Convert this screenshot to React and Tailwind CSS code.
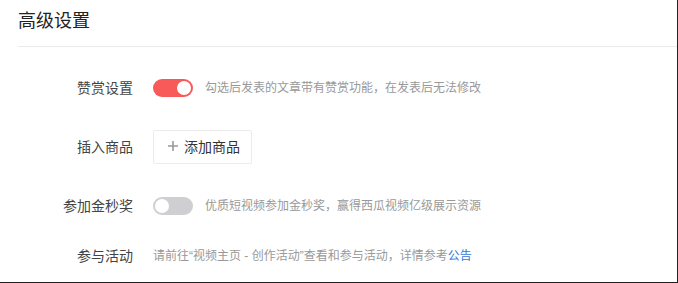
import React, { useState } from "react";

const FONT = { fontFamily: '"Liberation Sans", "Noto Sans CJK SC", sans-serif' };

// Simple switch used by the reward / golden-second rows
const Toggle = ({ on, onChange }) => (
  <button
    type="button"
    onClick={() => onChange(!on)}
    className={`relative w-[40px] h-[18px] rounded-full shrink-0 ${
      on ? "bg-[#f85959]" : "bg-[#cfcfd1]"
    }`}
  >
    <span
      className={`absolute top-[2px] w-[14px] h-[14px] rounded-full bg-white ${
        on ? "left-[24px]" : "left-[2px]"
      }`}
    />
  </button>
);

const Row = ({ label, className = "", children }) => (
  <div className={`flex items-center h-[36px] ${className}`}>
    <div className="w-[134px] text-right text-[14px] text-[#444] pr-px">{label}</div>
    <div className="flex items-center ml-[19px]">{children}</div>
  </div>
);

const App = () => {
  const [reward, setReward] = useState(true);
  const [golden, setGolden] = useState(false);

  return (
    <div
      className="w-[678px] h-[283px] bg-white border-r border-b border-[#222] overflow-hidden"
      style={FONT}
    >
      {/* Header */}
      <div className="ml-[18px] h-[47px] border-b border-[#ebebeb] flex items-center">
        <h2 className="text-[18px] leading-none text-[#222] font-normal -mt-[4px]">高级设置</h2>
      </div>

      <Row label="赞赏设置" className="mt-[23px]">
        <Toggle on={reward} onChange={setReward} />
        <span className="ml-[12px] text-[12px] text-[#999]">
          勾选后发表的文章带有赞赏功能，在发表后无法修改
        </span>
      </Row>

      <Row label="插入商品" className="mt-[23px]">
        <button
          type="button"
          className="flex items-center h-[34px] w-[99px] border border-[#ececec] rounded-[2px] bg-white text-[14px] text-[#333]"
        >
          <svg width="10" height="10" viewBox="0 0 10 10" className="ml-[14px] mr-[6px] -mt-[3px]">
            <path d="M5 0v10M0 5h10" stroke="#999" strokeWidth="1.6" />
          </svg>
          添加商品
        </button>
      </Row>

      <Row label="参加金秒奖" className="mt-[23px]">
        <Toggle on={golden} onChange={setGolden} />
        <span className="ml-[12px] text-[12px] text-[#999]">
          优质短视频参加金秒奖，赢得西瓜视频亿级展示资源
        </span>
      </Row>

      <Row label="参与活动" className="mt-[14px]">
        <span className="text-[12px] text-[#999]">
          请前往“视频主页 - 创作活动”查看和参与活动，详情参考
          <a href="#" className="text-[#3677d8]">公告</a>
        </span>
      </Row>
    </div>
  );
};

export default App;
